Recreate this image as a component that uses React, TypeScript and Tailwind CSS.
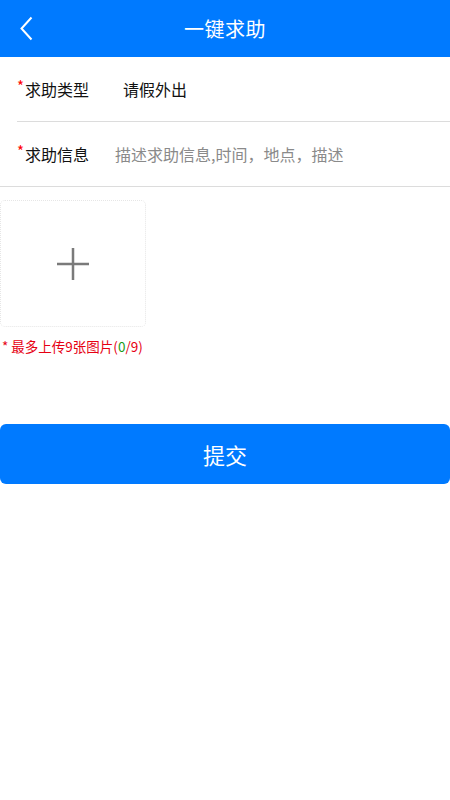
import React from 'react';

// =============================================================================
// ONE-KEY HELP FORM
// =============================================================================

const FONT = { fontFamily: '"Noto Sans CJK SC", "Noto Sans", sans-serif' };

function Header() {
  return (
    <div className="relative h-[57px] bg-[#007aff] flex items-center justify-center">
      <svg className="absolute left-[19px] top-[16px]" width="15" height="25" viewBox="0 0 15 25">
        <path d="M12.5 1.5 L2.5 12.5 L12.5 23.5" fill="none" stroke="#fff" strokeWidth="2" />
      </svg>
      <span className="text-white text-[20px] tracking-[0.5px]">一键求助</span>
    </div>
  );
}

function Required() {
  return <span className="text-[#ff0000] text-[15px] leading-none -mt-[8px] mr-[1px]">*</span>;
}

export default function App() {
  return (
    <div className="w-[450px] h-[800px] bg-white" style={FONT}>
      <Header />

      {/* 表单 */}
      <div className="pl-[17px]">
        <div className="h-[65px] flex items-center border-b border-[#dcdcdc] text-[16px] text-[#111]">
          <span className="w-[106px] flex items-center">
            <Required />
            <span>求助类型</span>
          </span>
          <span>请假外出</span>
        </div>
      </div>
      <div className="h-[65px] pl-[17px] flex items-center border-b border-[#dcdcdc] text-[16px] text-[#111]">
        <span className="w-[98px] flex items-center">
          <Required />
          <span>求助信息</span>
        </span>
        <span className="text-[#8a8a8a]">描述求助信息,时间，地点，描述</span>
      </div>

      {/* 上传图片 */}
      <div className="mt-[13px] w-[146px] h-[127px] border border-dotted border-[#e6e6e6] rounded-[5px] flex items-center justify-center">
        <svg width="32" height="32" viewBox="0 0 32 32">
          <path d="M0 16 H32 M16 0 V32" stroke="#7a7a7a" strokeWidth="2.5" />
        </svg>
      </div>
      <div className="mt-[9px] pl-[2px] text-[13.5px] text-[#e60012] leading-[20px]">
        * 最多上传9张图片(<span className="text-[#1a9a1a]">0</span>/9)
      </div>

      {/* 提交 */}
      <button className="mt-[68px] w-[450px] h-[60px] rounded-[6px] bg-[#007aff] text-white text-[22px] flex items-center justify-center">
        提交
      </button>
    </div>
  );
}
